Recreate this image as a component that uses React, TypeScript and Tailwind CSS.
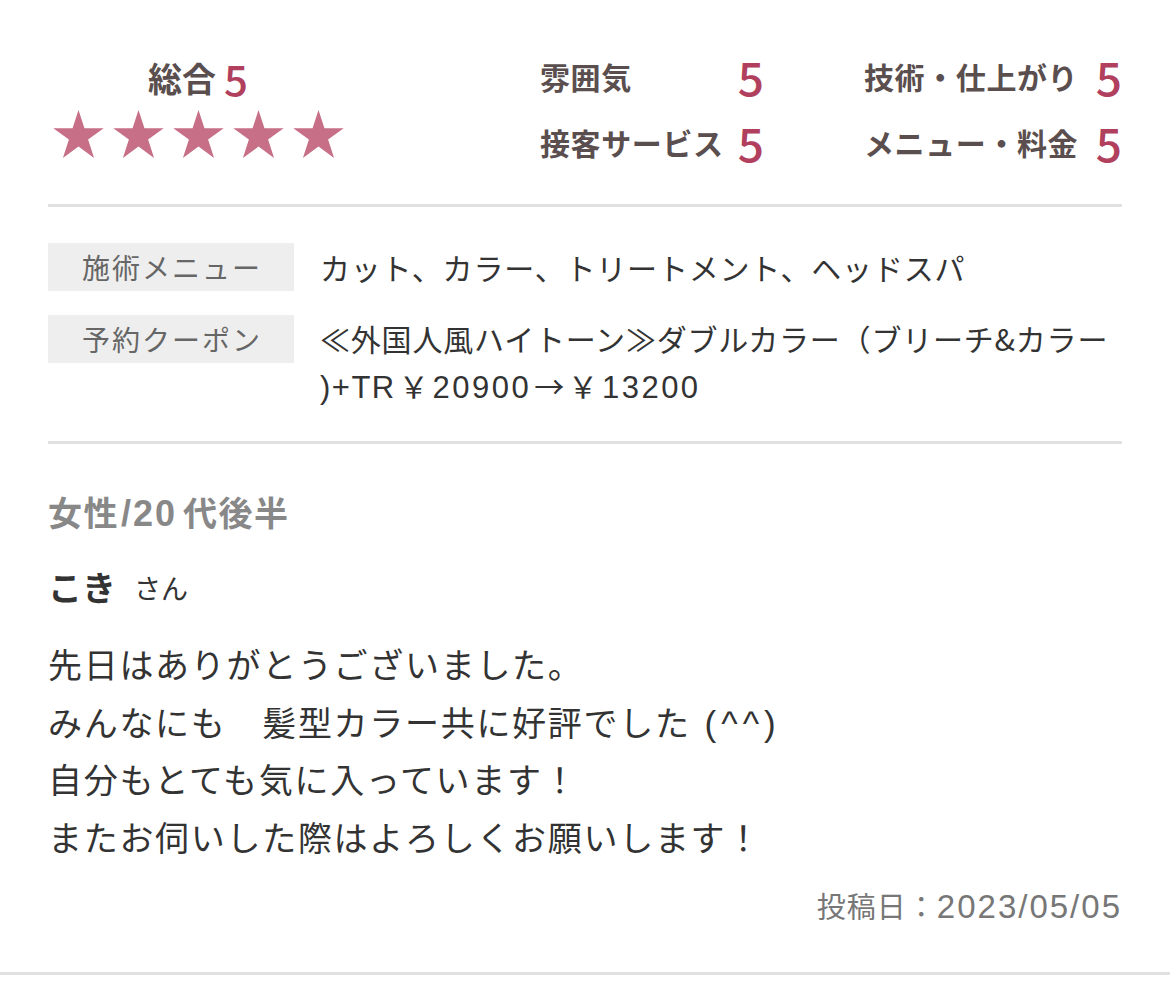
import React from "react";

const FONT = { fontFamily: '"Noto Sans CJK JP", "Noto Sans", sans-serif' };

const Star = () => (
  <svg width="51" height="48" viewBox="0 0 51 48">
    <polygon
      points="25.5,0 31.44,18.33 50.7,18.31 35.1,29.62 41.08,47.94 25.5,36.6 9.92,47.94 15.9,29.62 0.3,18.31 19.56,18.33"
      fill="#c66f86"
    />
  </svg>
);

const Score = ({ label }: { label: string }) => (
  <div className="flex h-[44px] items-center justify-between">
    <span className="text-[30px] font-bold leading-none tracking-[0.6px] text-[#5a4e4e]">{label}</span>
    <span className="text-[46px] font-medium leading-none text-[#b0405d]">5</span>
  </div>
);

export default function App() {
  return (
    <div className="min-h-[983px] w-[1170px] bg-white" style={FONT}>
      <div className="px-[48px]">
        {/* top ratings */}
        <div className="flex items-start justify-between pt-[54px] pb-[40px]">
          <div className="flex w-[300px] flex-col items-center pt-[4px]">
            <div className="flex h-[40px] items-center">
              <span className="text-[34px] font-bold leading-none text-[#5a4e4e]">総合</span>
              <span className="ml-[8px] text-[42px] font-medium leading-none text-[#b0405d]">5</span>
            </div>
            <div className="mt-[12px] flex gap-[9px]">
              <Star />
              <Star />
              <Star />
              <Star />
              <Star />
            </div>
          </div>
          <div className="grid grid-cols-[224px_258px] gap-x-[100px] gap-y-[22px]">
            <Score label="雰囲気" />
            <Score label="技術・仕上がり" />
            <Score label="接客サービス" />
            <Score label="メニュー・料金" />
          </div>
        </div>
        <div className="h-[3px] bg-[#e0e0e0]" />

        {/* menu & coupon */}
        <div className="flex flex-col gap-[24px] pt-[36px] pb-[32px]">
          <div className="flex items-start">
            <div className="flex h-[48px] w-[246px] shrink-0 items-center justify-center bg-[#eeeeee] pl-[2px] text-[28px] leading-none tracking-[2px] text-[#666]">
              施術メニュー
            </div>
            <div className="ml-[26px] h-[48px] text-[30px] leading-[48px] tracking-[0.8px] text-[#333]">
              カット、カラー、トリートメント、ヘッドスパ
            </div>
          </div>
          <div className="flex items-start">
            <div className="flex h-[48px] w-[246px] shrink-0 items-center justify-center bg-[#eeeeee] pl-[2px] text-[28px] leading-none tracking-[2px] text-[#666]">
              予約クーポン
            </div>
            <div className="ml-[26px] text-[30px] leading-[47px] tracking-[0.8px] text-[#333]">
              <div className="h-[47px] whitespace-nowrap">≪外国人風ハイトーン≫ダブルカラー（ブリーチ&amp;カラー</div>
              <div className="h-[47px] whitespace-nowrap">
                <span className="font-['Liberation_Sans'] text-[31px] leading-none tracking-[1.5px]">)+TR</span>
                <span className="mx-[3px] leading-none">￥</span>
                <span className="font-['Liberation_Sans'] text-[31px] leading-none tracking-[2.5px]">20900</span>
                <span className="mx-[3px] leading-none">→</span>
                <span className="mr-[3px] leading-none">￥</span>
                <span className="font-['Liberation_Sans'] text-[31px] leading-none tracking-[2.5px]">13200</span>
              </div>
            </div>
          </div>
        </div>
        <div className="h-[3px] bg-[#e0e0e0]" />

        {/* review */}
        <div className="flex flex-col pt-[46px] pb-[47px]">
          <div className="h-[44px] whitespace-nowrap text-[34px] font-bold leading-[44px] tracking-[1.5px] text-[#888]">
            <span>女性</span>
            <span className="ml-[2px] font-['Liberation_Sans'] text-[36px] leading-none tracking-[2px]">/20</span>
            <span className="ml-[6px]">代後半</span>
          </div>
          <div className="mt-[31px] flex h-[44px] items-center">
            <span className="text-[34px] font-bold leading-none text-[#333]">こき</span>
            <span className="ml-[18px] text-[27px] leading-none text-[#333]">さん</span>
          </div>
          <div className="mt-[26px] text-[34px] leading-[57.7px] tracking-[1.7px] text-[#333]">
            <div className="h-[57.7px]">先日はありがとうございました。</div>
            <div className="h-[57.7px] whitespace-nowrap">
              みんなにも　髪型カラー共に好評でした
              <span className="ml-[14px] font-['Liberation_Sans'] text-[35px] leading-none tracking-[5px]">(^^)</span>
            </div>
            <div className="h-[57.7px]">自分もとても気に入っています！</div>
            <div className="h-[57.7px]">またお伺いした際はよろしくお願いします！</div>
          </div>
          <div className="mt-[19px] h-[40px] whitespace-nowrap text-right text-[29px] leading-[40px] tracking-[1px] text-[#777]">
            <span>投稿日：</span>
            <span className="font-['Liberation_Sans'] text-[33px] leading-none tracking-[2px]">2023/05/05</span>
          </div>
        </div>
      </div>
      <div className="h-[3px] bg-[#e0e0e0]" />
    </div>
  );
}
